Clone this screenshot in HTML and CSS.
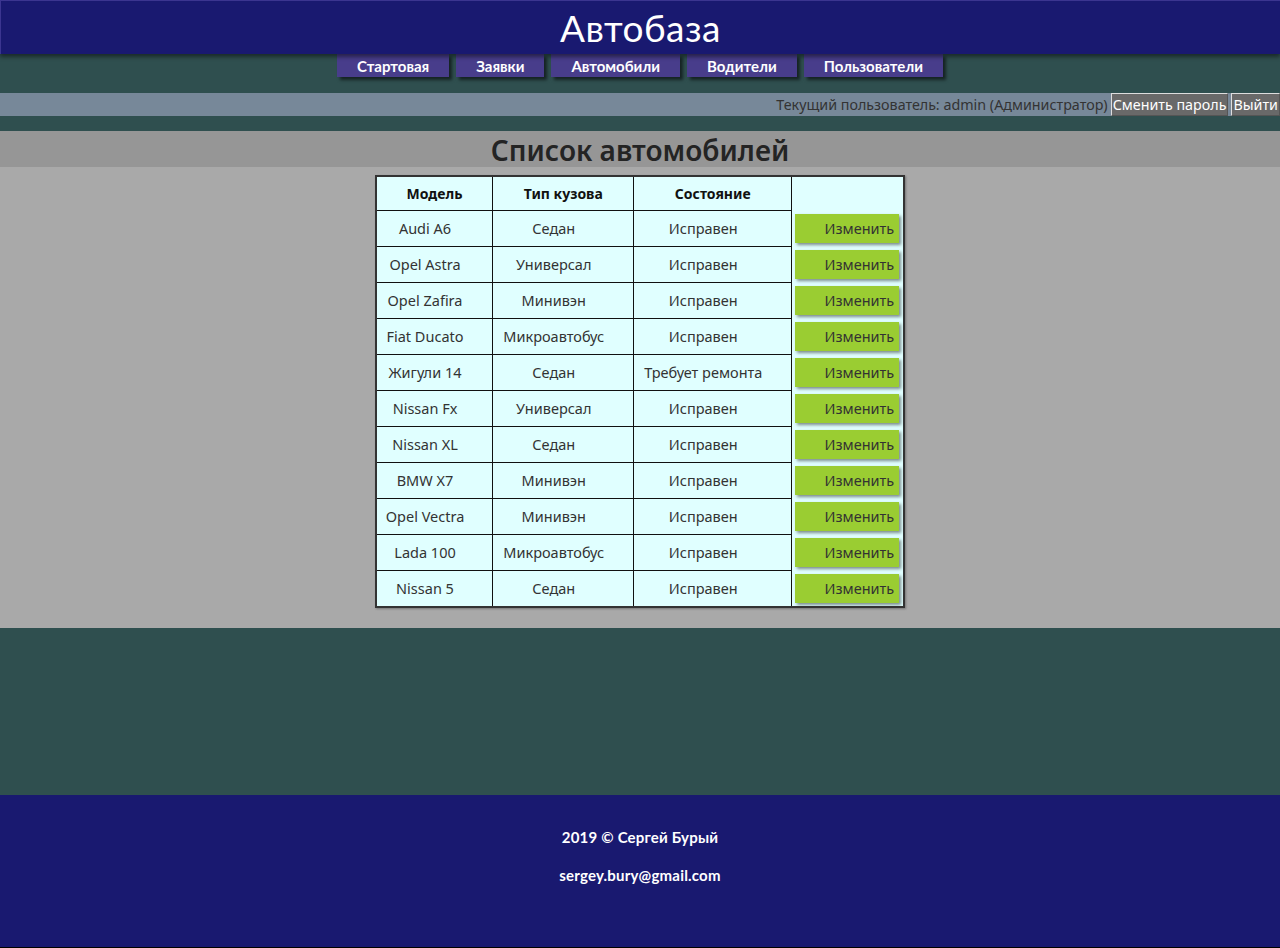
FILE: index.html
```html
<!DOCTYPE html>
<html lang="ru">
<head>
<meta charset="utf-8">
<title>Автобаза</title>
<link rel="stylesheet" href="styles.css">
</head>
<body>
<header class="site-header">
  <h1 class="site-title">Автобаза</h1>
</header>
<nav class="main-nav">
  <a class="nav-btn" href="#">Стартовая</a>
  <a class="nav-btn" href="#">Заявки</a>
  <a class="nav-btn" href="#">Автомобили</a>
  <a class="nav-btn" href="#">Водители</a>
  <a class="nav-btn" href="#">Пользователи</a>
</nav>
<div class="user-bar">
  <span class="user-text">Текущий пользователь: admin (Администратор)</span>
  <button class="user-btn">Сменить пароль</button>
  <button class="user-btn">Выйти</button>
</div>
<h2 class="page-title">Список автомобилей</h2>
<main class="content">
  <table class="cars">
    <thead>
      <tr><th>Модель</th><th>Тип кузова</th><th>Состояние</th><th class="act"></th></tr>
    </thead>
    <tbody>
      <tr><td>Audi A6</td><td>Седан</td><td>Исправен</td><td class="act"><button class="edit-btn">Изменить</button></td></tr>
      <tr><td>Opel Astra</td><td>Универсал</td><td>Исправен</td><td class="act"><button class="edit-btn">Изменить</button></td></tr>
      <tr><td>Opel Zafira</td><td>Минивэн</td><td>Исправен</td><td class="act"><button class="edit-btn">Изменить</button></td></tr>
      <tr><td>Fiat Ducato</td><td>Микроавтобус</td><td>Исправен</td><td class="act"><button class="edit-btn">Изменить</button></td></tr>
      <tr><td>Жигули 14</td><td>Седан</td><td>Требует ремонта</td><td class="act"><button class="edit-btn">Изменить</button></td></tr>
      <tr><td>Nissan Fx</td><td>Универсал</td><td>Исправен</td><td class="act"><button class="edit-btn">Изменить</button></td></tr>
      <tr><td>Nissan XL</td><td>Седан</td><td>Исправен</td><td class="act"><button class="edit-btn">Изменить</button></td></tr>
      <tr><td>BMW X7</td><td>Минивэн</td><td>Исправен</td><td class="act"><button class="edit-btn">Изменить</button></td></tr>
      <tr><td>Opel Vectra</td><td>Минивэн</td><td>Исправен</td><td class="act"><button class="edit-btn">Изменить</button></td></tr>
      <tr><td>Lada 100</td><td>Микроавтобус</td><td>Исправен</td><td class="act"><button class="edit-btn">Изменить</button></td></tr>
      <tr><td>Nissan 5</td><td>Седан</td><td>Исправен</td><td class="act"><button class="edit-btn">Изменить</button></td></tr>
    </tbody>
  </table>
</main>
<div class="spacer"></div>
<footer class="site-footer">
  <p class="foot-line">2019 © Сергей Бурый</p>
  <p class="foot-line">sergey.bury@gmail.com</p>
</footer>
</body>
</html>
```

FILE: styles.css
```css
html, body {
  margin: 0;
  padding: 0;
}
body {
  min-height: 100vh;
  display: flex;
  flex-direction: column;
  background: #2f4f4f;
  font-family: "Noto Sans", "Open Sans", sans-serif;
  font-size: 14px;
  color: #333;
}
.site-header {
  height: 54px;
  box-sizing: border-box;
  background: #191970;
  border-top: 1px solid #3b3590;
  border-left: 1px solid #3b3590;
  box-shadow: 0 3px 4px rgba(0, 0, 0, 0.45);
  display: flex;
  justify-content: center;
  align-items: center;
  position: relative;
  z-index: 2;
}
.site-title {
  margin: 0;
  font-family: "Comic Sans MS", "Lato", sans-serif;
  font-weight: normal;
  font-size: 37px;
  color: #fff;
  letter-spacing: 0.5px;
}
.main-nav {
  display: flex;
  justify-content: center;
  gap: 7px;
  height: 23px;
}
.nav-btn {
  display: flex;
  align-items: center;
  padding: 0 20px;
  background: #483d8b;
  color: #fff;
  font-family: "Comic Sans MS", "Lato", sans-serif;
  font-weight: bold;
  font-size: 15px;
  text-decoration: none;
  box-shadow: 3px 3px 3px rgba(0, 0, 0, 0.55);
}
.user-bar {
  margin-top: 16px;
  height: 23px;
  background: #778899;
  display: flex;
  justify-content: flex-end;
  align-items: center;
  gap: 3px;
}
.user-text {
  font-size: 14.3px;
  color: #333;
}
.user-btn {
  height: 23px;
  box-sizing: border-box;
  margin: 0;
  padding: 0 1px;
  background: #696969;
  color: #fff;
  border: 1px solid #ddd;
  border-right-color: #555;
  border-bottom-color: #555;
  font-family: "Noto Sans", "Open Sans", sans-serif;
  font-size: 14.3px;
  line-height: 20px;
}
.page-title {
  margin: 15px 0 0;
  height: 36px;
  background: #969696;
  text-align: center;
  font-size: 28px;
  font-weight: 600;
  line-height: 38px;
  color: #242424;
}
.content {
  background: #a9a9a9;
  padding: 8px 0 20px;
  display: flex;
  justify-content: center;
}
.cars {
  border-collapse: collapse;
  border: 2px solid #333;
  background: #e0ffff;
  box-shadow: 1px 1px 2px rgba(0, 0, 0, 0.3);
}
.cars th {
  height: 34px;
  box-sizing: border-box;
  padding: 0;
  border: 1px solid #111;
  font-weight: bold;
  font-size: 14px;
  color: #111;
  text-align: center;
}
.cars td {
  height: 36px;
  box-sizing: border-box;
  padding: 0 19px 0 0;
  border: 1px solid #111;
  text-align: center;
  font-size: 14.5px;
  color: #333;
}
.cars tbody tr:last-child td {
  height: 37px;
}
.cars th:nth-child(1) { width: 117px; }
.cars th:nth-child(2) { width: 141px; }
.cars th:nth-child(3) { width: 158px; }
.cars th.act {
  width: 112px;
  border-top: none;
  border-bottom: none;
}
.cars td.act {
  padding: 0 4px 0 3px;
  border-top: none;
  border-bottom: none;
}
.edit-btn {
  display: block;
  width: 104px;
  height: 29px;
  margin: 0;
  padding: 0 5px 0 0;
  border: none;
  background: #9acd32;
  color: #333;
  text-align: right;
  font-family: "Noto Sans", "Open Sans", sans-serif;
  font-size: 14.5px;
  box-shadow: 2px 2px 3px rgba(0, 0, 0, 0.45);
}
.spacer {
  flex: 1;
}
.site-footer {
  height: 153px;
  box-sizing: border-box;
  background: #191970;
  border-bottom: 1px solid #000;
  padding-top: 33px;
  text-align: center;
  color: #fff;
  font-family: "Comic Sans MS", "Lato", sans-serif;
  font-weight: bold;
  font-size: 15px;
  letter-spacing: 0.2px;
}
.foot-line {
  margin: 0 0 19px;
  line-height: 19px;
}
```
